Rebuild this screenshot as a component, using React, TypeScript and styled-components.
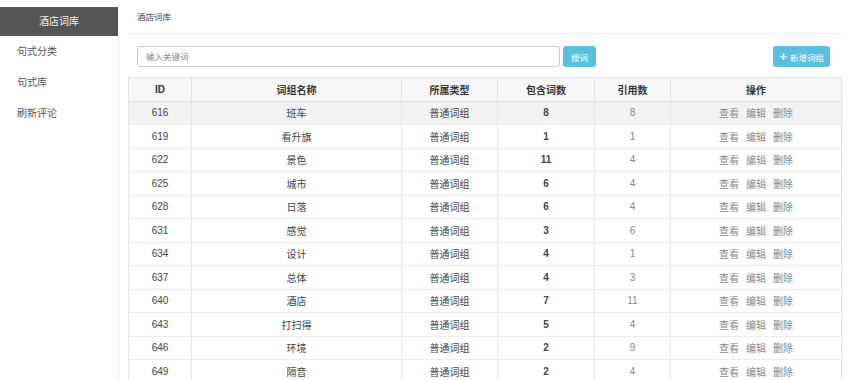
import React from 'react';
import styled, { createGlobalStyle } from 'styled-components';

interface Phrase {
    id: number;
    name: string;
    type: string;
    words: number;
    refs: number;
}

const phrases: Phrase[] = [
    { id: 616, name: '班车', type: '普通词组', words: 8, refs: 8 },
    { id: 619, name: '看升旗', type: '普通词组', words: 1, refs: 1 },
    { id: 622, name: '景色', type: '普通词组', words: 11, refs: 4 },
    { id: 625, name: '城市', type: '普通词组', words: 6, refs: 4 },
    { id: 628, name: '日落', type: '普通词组', words: 6, refs: 4 },
    { id: 631, name: '感觉', type: '普通词组', words: 3, refs: 6 },
    { id: 634, name: '设计', type: '普通词组', words: 4, refs: 1 },
    { id: 637, name: '总体', type: '普通词组', words: 4, refs: 3 },
    { id: 640, name: '酒店', type: '普通词组', words: 7, refs: 11 },
    { id: 643, name: '打扫得', type: '普通词组', words: 5, refs: 4 },
    { id: 646, name: '环境', type: '普通词组', words: 2, refs: 9 },
    { id: 649, name: '隔音', type: '普通词组', words: 2, refs: 4 },
];

const menu = ['酒店词库', '句式分类', '句式库', '刷新评论'];

const App = () => {
    return (
        <>
            <GlobalStyle />
            <Page>
                <Sidebar>
                    {menu.map((item, i) => (
                        <MenuItem key={item} $active={i === 0}>{item}</MenuItem>
                    ))}
                </Sidebar>
                <Main>
                    <Breadcrumb>酒店词库</Breadcrumb>
                    <Toolbar>
                        <SearchInput placeholder="输入关键词" />
                        <Button>搜词</Button>
                        <Button $wide>
                            <Plus>+</Plus>新增词组
                        </Button>
                    </Toolbar>
                    <Table>
                        <colgroup>
                            <col style={{ width: 63 }} />
                            <col style={{ width: 210 }} />
                            <col style={{ width: 96 }} />
                            <col style={{ width: 97 }} />
                            <col style={{ width: 76 }} />
                            <col />
                        </colgroup>
                        <thead>
                            <tr>
                                <Th>ID</Th>
                                <Th>词组名称</Th>
                                <Th>所属类型</Th>
                                <Th>包含词数</Th>
                                <Th>引用数</Th>
                                <Th>操作</Th>
                            </tr>
                        </thead>
                        <tbody>
                            {phrases.map((p, i) => (
                                <Row key={p.id} $hover={i === 0}>
                                    <Td $weight={500}>{p.id}</Td>
                                    <Td>{p.name}</Td>
                                    <Td>{p.type}</Td>
                                    <Td $weight={700}>{p.words}</Td>
                                    <Td $light>{p.refs}</Td>
                                    <Td $light>
                                        <Action>查看</Action>
                                        <Action>编辑</Action>
                                        <Action>删除</Action>
                                    </Td>
                                </Row>
                            ))}
                        </tbody>
                    </Table>
                </Main>
            </Page>
        </>
    );
};

export default App;

const GlobalStyle = createGlobalStyle`
    body {
        margin: 0;
        background: #fff;
        font-family: "Helvetica Neue", "Liberation Sans", "Noto Sans CJK SC", sans-serif;
        color: #555;
    }
`;

const Page = styled.div`
    display: flex;
    width: 866px;
    height: 380px;
    overflow: hidden;
`;

const Sidebar = styled.div`
    width: 118px;
    flex-shrink: 0;
    padding-top: 7px;
    border-right: 1px solid #f0f0f0;
`;

const MenuItem = styled.div<{ $active?: boolean }>`
    height: ${(p) => (p.$active ? '29px' : '31px')};
    line-height: ${(p) => (p.$active ? '29px' : '31px')};
    font-size: 10px;
    padding-left: ${(p) => (p.$active ? '0' : '17px')};
    text-align: ${(p) => (p.$active ? 'center' : 'left')};
    background: ${(p) => (p.$active ? '#555' : 'transparent')};
    color: ${(p) => (p.$active ? '#eee' : '#555')};
`;

const Main = styled.div`
    margin-left: 9px;
    width: 714px;
`;

const Breadcrumb = styled.div`
    height: 34px;
    line-height: 34px;
    padding-left: 9px;
    font-size: 8.5px;
    color: #444;
    border-bottom: 1px solid #f2f2f2;
    box-sizing: border-box;
`;

const Toolbar = styled.div`
    display: flex;
    align-items: center;
    gap: 3px;
    margin-top: 12px;
    padding: 0 12px 0 9px;
    height: 21px;
    & > :last-child {
        margin-left: auto;
    }
`;

const SearchInput = styled.input`
    width: 423px;
    height: 21px;
    box-sizing: border-box;
    border: 1px solid #ccc;
    border-radius: 3px;
    padding: 0 8px;
    font-size: 8.5px;
    font-family: inherit;
    outline: none;
    &::placeholder {
        color: #888;
    }
`;

const Button = styled.button<{ $wide?: boolean }>`
    height: 21px;
    padding: 0 ${(p) => (p.$wide ? '6px' : '8px')};
    display: flex;
    align-items: center;
    gap: 3px;
    border: none;
    border-radius: 3px;
    background: #5bc0de;
    color: #fff;
    font-size: 8.5px;
    font-family: inherit;
`;

const Plus = styled.span`
    font-size: 13px;
    font-weight: 700;
    line-height: 1;
    margin-top: -1px;
`;

const Table = styled.table`
    margin-top: 10px;
    width: 714px;
    border-collapse: collapse;
    table-layout: fixed;
    border: 1px solid #e4e4e4;
`;

const Th = styled.th`
    height: 22.5px;
    padding: 0;
    background: #f7f7f7;
    font-size: 10px;
    font-weight: 700;
    color: #333;
    border-left: 1px solid #e2e2e2;
    border-bottom: 1px solid #e2e2e2;
    text-align: center;
`;

const Row = styled.tr<{ $hover?: boolean }>`
    background: ${(p) => (p.$hover ? '#f2f2f2' : '#fff')};
`;

const Td = styled.td<{ $weight?: number; $light?: boolean }>`
    height: 22.5px;
    padding: 0;
    text-align: center;
    font-size: 10px;
    font-weight: ${(p) => p.$weight ?? 400};
    color: ${(p) => (p.$light ? '#888' : '#444')};
    border-left: 1px solid #e6e6e6;
    border-bottom: 1px solid #ececec;
`;

const Action = styled.span`
    margin: 0 3.5px;
    color: #888;
`;
